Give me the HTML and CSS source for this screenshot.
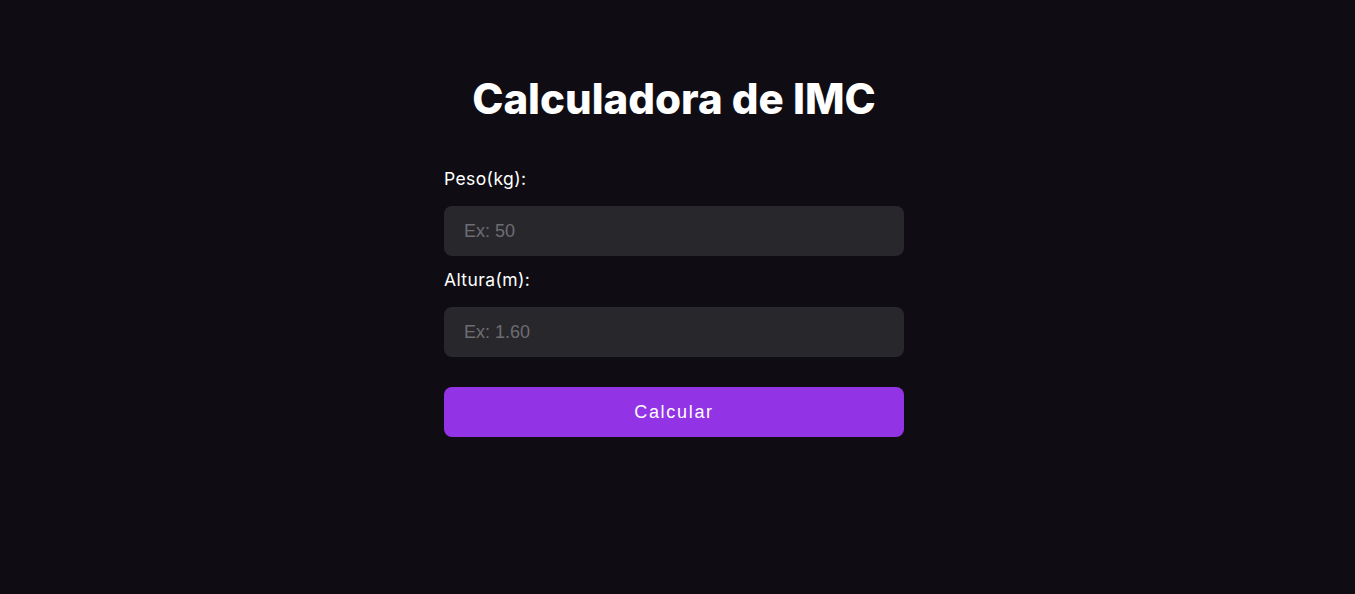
FILE: index.html
```html
<!DOCTYPE html>
<html lang="pt">
<head>
<meta charset="utf-8">
<title>Calculadora de IMC</title>
<link rel="stylesheet" href="styles.css">
</head>
<body>
<main class="page">
  <div class="card">
    <h1 class="title">Calculadora de IMC</h1>
    <form class="form">
      <label class="label" for="peso">Peso(kg):</label>
      <input class="field" id="peso" type="text" placeholder="Ex: 50">
      <label class="label" for="altura">Altura(m):</label>
      <input class="field" id="altura" type="text" placeholder="Ex: 1.60">
      <button class="btn" type="button">Calcular</button>
    </form>
  </div>
</main>
</body>
</html>
```

FILE: styles.css
```css
* { box-sizing: border-box; }
html, body { margin: 0; height: 100%; }
body {
  background: #0f0d13;
  color: #ffffff;
  font-family: "Open Sans", "Noto Sans", sans-serif;
}
.page {
  display: flex;
  justify-content: center;
  padding-right: 7px;
  padding-top: 71px;
}
.card {
  width: 460px;
  display: flex;
  flex-direction: column;
}
.title {
  margin: 0 0 40px;
  text-align: center;
  font-family: "Inter", sans-serif;
  font-weight: 800;
  font-size: 42px;
  line-height: 56px;
  letter-spacing: 0;
}
.form {
  display: flex;
  flex-direction: column;
}
.label {
  font-family: "Inter", sans-serif;
  font-size: 17.5px;
  line-height: 24px;
  letter-spacing: 0.4px;
  margin-bottom: 15px;
}
.field {
  height: 50px;
  border: none;
  border-radius: 8px;
  background: #28272c;
  color: #ffffff;
  padding: 0 20px;
  font-family: "Liberation Sans", Arial, sans-serif;
  font-size: 18px;
  outline: none;
  margin-bottom: 12px;
}
.field::placeholder { color: #6e6d72; }
.btn {
  margin-top: 18px;
  height: 50px;
  border: none;
  border-radius: 8px;
  background: #9333e6;
  color: #ffffff;
  font-family: "Liberation Sans", Arial, sans-serif;
  font-size: 18px;
  letter-spacing: 1.7px;
}
```
